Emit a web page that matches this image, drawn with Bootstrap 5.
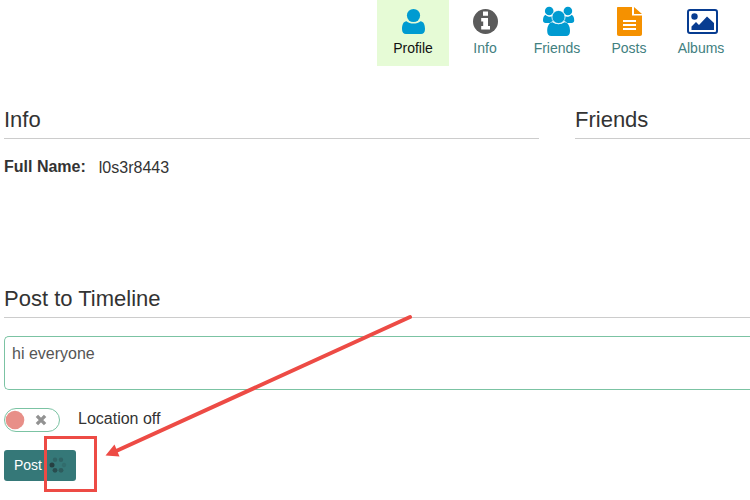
<!DOCTYPE html>
<html lang="en">
<head>
<meta charset="utf-8">
<meta name="viewport" content="width=device-width, initial-scale=1">
<title>Profile</title>
<link href="https://cdn.jsdelivr.net/npm/bootstrap@5.3.0/dist/css/bootstrap.min.css" rel="stylesheet">
<style>
body { font-family: "Liberation Sans", Arial, sans-serif; font-size: 16px; line-height: 24px; color: #333; background: #fff; overflow-x: hidden; }
.profile-tabs { padding-right: 13px; }
.profile-tabs .nav-link { width: 72px; height: 66px; padding: 6px 0 0; border-radius: 0; font-size: 14px; line-height: 20px; color: #418080; text-align: center; }
.profile-tabs .nav-link.active { background: #e6fbd6; color: #111; }
.profile-tabs svg { display: block; height: 32px; width: 32px; margin: 0 auto; overflow: visible; }
.page-body { padding: 0 0 19px 4px; }
.profile-columns { padding-top: 37px; gap: 36px; min-height: 216px; }
.friends-column { width: 175px; }
.section-title { font-size: 22px; line-height: 32px; font-weight: 400; padding-top: 1px; padding-bottom: 2px; margin: 0; border-bottom: 1px solid #ccc; color: #333; }
.full-name { gap: 13px; margin: 16px 0 0; }
.full-name dd { margin-top: 1px; }
.post-box { height: 54px; margin-top: 18px; padding: 5px 7px; border: 1px solid #7bc3a3; border-right: 0; border-radius: 5px 0 0 5px; color: #555; resize: none; font-size: 16px; line-height: 24px; }
.location-row { margin-top: 18px; gap: 18px; }
.toggle-wrap { display: grid; }
.toggle-wrap > * { grid-area: 1 / 1; }
.toggle-wrap svg { pointer-events: none; width: 56px; height: 24px; }
.location-toggle.form-check-input { width: 56px; height: 24px; margin: 0; border: 1px solid #7bc3a3; border-radius: 12px; background-color: #fff; background-image: none; }
.location-row label { line-height: 22px; margin-bottom: 2px; }
.post-button { margin-top: 18px; padding: 5px 8px 6px 10px; border: 0; border-radius: 3px; background: #357878; color: #fff; font-size: 14px; line-height: 20px; gap: 6px; }
.post-button:hover { background: #2f6d6d; color: #fff; }
.callout { top: 0; left: 0; pointer-events: none; }
</style>
<script src="https://cdn.jsdelivr.net/npm/bootstrap@5.3.0/dist/js/bootstrap.bundle.min.js"></script>
</head>
<body>
<div class="position-relative">
<nav aria-label="Profile sections">
  <ul class="nav profile-tabs justify-content-end">
    <li><a class="nav-link active" aria-current="page" href="#profile">
      <svg viewBox="0 0 32 32" fill="#009bd1"><circle cx="16.500" cy="9.500" r="6.600"/><path d="M9.500 15.200C6.500 15.300 5 18.500 5 23c0 3.500 1.500 5 4 5h15c2.500 0 4-1.500 4-5 0-4.500-1.500-7.700-4.500-7.800-1.800 1.600-4.200 2.300-7 2.300s-5.200-.7-7-2.300z"/></svg>Profile</a></li>
    <li><a class="nav-link" href="#info">
      <svg viewBox="0 0 32 32"><circle cx="16.500" cy="15.500" r="12.500" fill="#5b5b5b"/><path fill="#fff" d="M14 5.500h5v4.200h-5zM12.200 12H19v8h2v3.500h-8.800V20h2v-4.500h-2z"/></svg>Info</a></li>
    <li><a class="nav-link" href="#friends">
      <svg viewBox="0 0 32 32" fill="#009bd1"><circle cx="8.200" cy="5" r="4.300"/><circle cx="26.900" cy="5" r="4.300"/><path d="M4.500 8.700C2.500 9.500 2 12 2 14.500c0 1.500 1 2.500 2.500 2.500H9c1.200-1.100 2.500-1.800 3.900-2.200-.9-1.500-1.100-3-.9-4.700-2.700 1.300-5.500.8-7.500-1.400zM30.600 8.700c2 .8 2.600 3.300 2.600 5.800 0 1.500-1 2.500-2.500 2.500h-4.500c-1.200-1.100-2.500-1.800-3.900-2.200.9-1.500 1.100-3 .9-4.700 2.700 1.300 5.500.8 7.400-1.400z"/><path d="M11.500 16.200C8 16.500 6.200 20 6.200 25c0 3.400 1.500 5 4 5h15c2.500 0 3.800-1.600 3.800-5 0-5-1.800-8.500-5.500-8.800-3.500 2.600-8.500 2.600-12 0z"/><circle cx="17.500" cy="11" r="6.600" stroke="#fff" stroke-width=".8"/></svg>Friends</a></li>
    <li><a class="nav-link" href="#posts">
      <svg viewBox="0 0 32 32" fill="#f59100"><path d="M5 1h14v8.500h10V28c0 1.300-.7 2-2 2H6c-1.300 0-2-.7-2-2V2c0-.6.400-1 1-1zM21 1l8 7h-8z"/><path d="M10 15h13M10 19h13M10 23h13" stroke="#fff" stroke-width="2"/></svg>Posts</a></li>
    <li><a class="nav-link" href="#albums">
      <svg viewBox="0 0 32 32" fill="#073c91"><rect x="3" y="4" width="29" height="23" rx="2" fill="none" stroke="#073c91" stroke-width="2"/><circle cx="9.500" cy="10.500" r="3.200"/><path d="M6.500 24v-3.500l4.500-4.500 3 3 8-8.500 7 6.500v7z"/></svg>Albums</a></li>
  </ul>
</nav>
<main class="page-body">
  <div class="profile-columns d-flex">
    <section id="info" class="flex-grow-1">
      <h2 class="section-title">Info</h2>
      <dl class="full-name d-flex"><dt>Full Name:</dt><dd class="mb-0">l0s3r8443</dd></dl>
    </section>
    <section id="friends" class="friends-column"><h2 class="section-title">Friends</h2></section>
  </div>
  <section id="posts">
    <h2 class="section-title"><label for="post-text">Post to Timeline</label></h2>
    <form>
      <textarea id="post-text" class="form-control post-box">hi everyone</textarea>
      <div class="location-row d-flex align-items-center">
        <div class="toggle-wrap">
          <input id="location" class="form-check-input location-toggle" type="checkbox" role="switch">
          <svg viewBox="0 0 56 24" aria-hidden="true"><circle cx="11" cy="12" r="9.300" fill="#e88f88"/><path d="M32.900 7.900l8.200 8.200m0-8.200l-8.200 8.200" stroke="#929292" stroke-width="3.400"/></svg>
        </div>
        <label for="location">Location off</label>
      </div>
      <button type="button" class="btn post-button d-flex align-items-center">Post
        <svg width="20" height="18" viewBox="0 0 20 18" aria-hidden="true" fill="#263f41"><circle cx="4" cy="9" r="2.500"/><circle cx="7" cy="14.300" r="2.400" opacity=".75"/><circle cx="13" cy="14.300" r="2.400" opacity=".5"/><circle cx="16" cy="9" r="2.200" opacity=".2"/><circle cx="13" cy="3.700" r="2.200" opacity=".35"/><circle cx="7" cy="3.700" r="2.200" opacity=".35"/></svg>
      </button>
    </form>
  </section>
</main>
<svg class="callout position-absolute" width="420" height="500" viewBox="0 0 420 500" aria-hidden="true"><rect x="45.500" y="437.500" width="50" height="53" fill="none" stroke="#ed4b45" stroke-width="3"/><path d="M410 317L114 452" stroke="#ed4b45" stroke-width="4" stroke-linecap="round"/><path d="M105.500 455.500l9-11 5 12z" fill="#ed4b45"/></svg>
</div>
</body>
</html>
